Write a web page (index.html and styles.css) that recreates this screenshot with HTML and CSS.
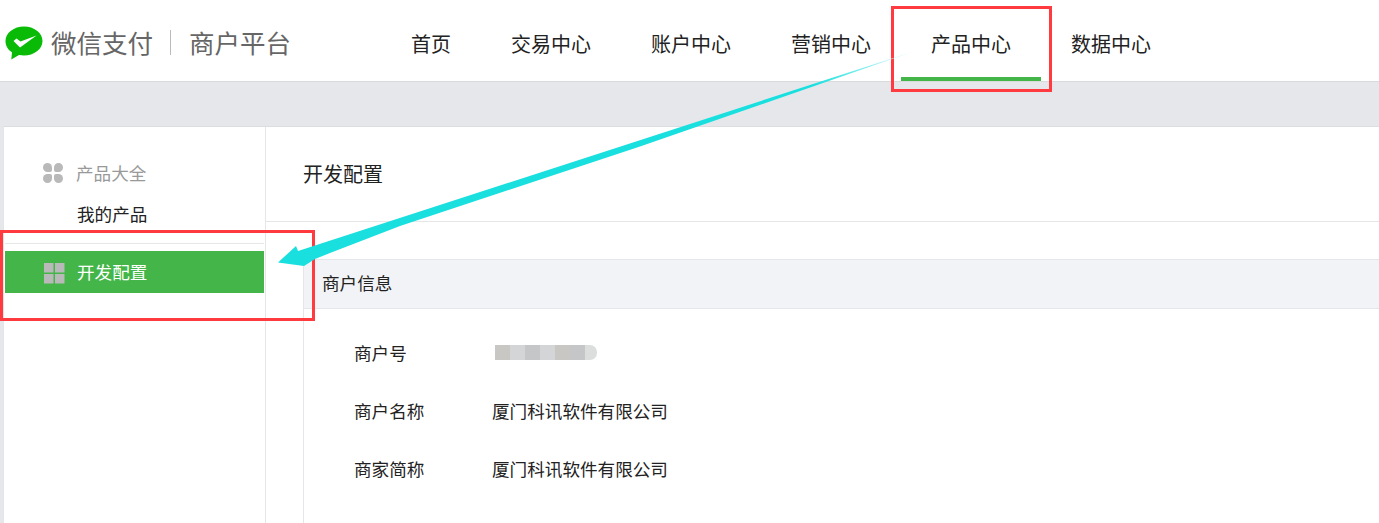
FILE: index.html
```html
<!DOCTYPE html>
<html lang="zh-CN">
<head>
  <meta charset="UTF-8">
  <title>微信支付商户平台</title>
  <link rel="stylesheet" href="styles.css">
</head>
<body>
  <header class="topbar">
    <div class="logo">
      <svg class="logo-icon" width="38" height="34" viewBox="0 0 38 34">
        <path d="M19 0.500C9 0.500 0.500 6.700 0.500 15C0.500 19.800 3 23.800 7 26.300L6.300 33.500L14 29C15.600 29.300 17.300 29.500 19 29.500C29 29.500 37.500 23.300 37.500 15C37.500 6.700 29 0.500 19 0.500Z" fill="#09bb07"/>
        <path d="M8.500 15L11.500 12.500L15.500 15.500L31.500 9.500L15 21.500Z" fill="#fff"/>
      </svg>
      <span class="logo-name">微信支付</span>
      <span class="logo-line"></span>
      <span class="logo-name">商户平台</span>
    </div>
    <nav class="nav">
      <a class="nav-item">首页</a>
      <a class="nav-item">交易中心</a>
      <a class="nav-item">账户中心</a>
      <a class="nav-item">营销中心</a>
      <a class="nav-item active">产品中心</a>
      <a class="nav-item">数据中心</a>
    </nav>
  </header>

  <div class="page">
    <aside class="sidebar">
      <div class="side-title">
        <svg class="side-icon" width="22" height="22" viewBox="0 0 22 22" fill="#b9b9b9">
          <path d="M5.500 1A4.500 4.500 0 0 1 10 5.500V8A2 2 0 0 1 8 10H5.500A4.500 4.500 0 0 1 5.500 1Z"/>
          <path d="M16.500 1A4.500 4.500 0 0 1 16.500 10H14A2 2 0 0 1 12 8V5.500A4.500 4.500 0 0 1 16.500 1Z"/>
          <path d="M5.500 12H8A2 2 0 0 1 10 14V16.500A4.500 4.500 0 1 1 5.500 12Z"/>
          <path d="M14 12H16.500A4.500 4.500 0 1 1 12 16.500V14A2 2 0 0 1 14 12Z"/>
        </svg>
        <span class="side-text">产品大全</span>
      </div>
      <div class="side-link">我的产品</div>
      <div class="side-divider"></div>
      <div class="side-active">
        <svg class="side-icon low" width="22" height="22" viewBox="0 0 22 22" fill="#b9b9b9">
          <rect x="1" y="1" width="9.500" height="9.500"/>
          <rect x="12" y="1" width="9.500" height="9.500"/>
          <rect x="1" y="12" width="9.500" height="9.500"/>
          <rect x="12" y="12" width="9.500" height="9.500"/>
        </svg>
        <span class="side-text">开发配置</span>
      </div>
    </aside>

    <main class="content">
      <h1 class="content-title">开发配置</h1>
      <section class="panel">
        <h2 class="panel-head">商户信息</h2>
        <dl class="info">
          <div class="info-row">
            <dt>商户号</dt>
            <dd class="masked">
              <i class="m1"></i><i class="m2"></i><i class="m3"></i><i class="m2"></i><i class="m1"></i><i class="m3"></i><i class="m4"></i>
            </dd>
          </div>
          <div class="info-row">
            <dt>商户名称</dt>
            <dd>厦门科讯软件有限公司</dd>
          </div>
          <div class="info-row">
            <dt>商家简称</dt>
            <dd>厦门科讯软件有限公司</dd>
          </div>
        </dl>
      </section>
    </main>
  </div>

  <!-- annotations drawn on top of the screenshot -->
  <div class="mark mark-nav"></div>
  <div class="mark mark-side"></div>
  <svg class="arrow" width="1379" height="523" viewBox="0 0 1379 523">
    <defs>
      <linearGradient id="arrowFill" gradientUnits="userSpaceOnUse" x1="278" y1="262" x2="915" y2="51">
        <stop offset="0" stop-color="#19dfdf"/>
        <stop offset="0.84" stop-color="#19dfdf"/>
        <stop offset="1" stop-color="#e8fbfb"/>
      </linearGradient>
    </defs>
    <path d="M278 262.500L296 246L298 251L915 51L640 146.500L400 226L330 253L315 259L304 266Z" fill="url(#arrowFill)"/>
  </svg>
</body>
</html>
```

FILE: styles.css
```css
* {
  box-sizing: border-box;
}
html, body {
  height: 523px;
  overflow: hidden;
}
body {
  margin: 0;
  background-color: #e5e7eb;
  color: #222;
  font-family: "Noto Sans CJK SC", "Liberation Sans", sans-serif;
  position: relative;
}
.topbar {
  display: flex;
  height: 82px;
  background: #fff;
  border-bottom: 1px solid #d9dadc;
}
.logo {
  display: flex;
  align-items: center;
  width: 381px;
  height: 81px;
  padding: 3px 0 0 5px;
}
.logo-icon {
  margin-right: 8px;
  margin-top: 1px;
}
.logo-name {
  font-size: 25.500px;
  line-height: 34px;
  color: #666;
}
.logo-line {
  width: 1px;
  height: 25px;
  margin: 0 18px 0 17px;
  background: #bbb;
}
.nav {
  display: flex;
}
.nav-item {
  height: 81px;
  padding: 0 30px;
  border-bottom: 4px solid transparent;
  font-size: 20px;
  line-height: 88px;
  white-space: nowrap;
}
.nav-item.active {
  border-bottom-color: #44b549;
}
.page {
  display: flex;
  height: 397px;
  margin: 44px 0 0 3px;
  background: #fff;
  border-top: 1px solid #dcdde0;
  border-left: 1px solid #e4e5e7;
}
.sidebar {
  width: 262px;
  padding-top: 25px;
  border-right: 1px solid #e5e6e8;
  font-size: 17.600px;
}
.side-title, .side-active {
  display: flex;
  align-items: center;
  padding-left: 38px;
}
.side-title {
  height: 42px;
  color: #999;
}
.side-icon {
  margin-right: 12px;
}
.side-icon.low {
  margin-top: 2px;
}
.side-text {
  margin-bottom: 2px;
}
.side-link {
  height: 42px;
  padding-left: 73px;
  line-height: 40px;
}
.side-divider {
  height: 1px;
  margin: 7px 1px;
  background: #e5e6e8;
}
.side-active {
  height: 42px;
  margin: 0 1px;
  background: #44b549;
  color: #fff;
}
.content {
  flex: 1;
  display: flex;
  flex-direction: column;
}
.content-title {
  height: 95px;
  margin: 0;
  padding-left: 37px;
  border-bottom: 1px solid #e5e6e8;
  font-size: 20px;
  font-weight: 400;
  line-height: 94px;
}
.panel {
  flex: 1;
  margin: 37px 0 0 37px;
  border-left: 1px solid #e5e6e8;
}
.panel-head {
  height: 50px;
  margin: 0;
  padding-left: 18px;
  background: #f2f3f7;
  border-top: 1px solid #e5e6ea;
  border-bottom: 1px solid #e5e6ea;
  font-size: 17.600px;
  font-weight: 400;
  line-height: 45px;
}
.info {
  margin: 15px 0 0;
}
.info-row {
  display: flex;
  height: 58px;
  padding-left: 50px;
  font-size: 17.600px;
  line-height: 58px;
}
.info-row dt {
  width: 138px;
}
.info-row dd {
  margin: 0;
}
.masked {
  display: flex;
  align-items: center;
  height: 58px;
  padding: 0 0 2px 3px;
}
.masked i {
  display: block;
  width: 15px;
  height: 15px;
}
.masked .m1 { background: #c8c7c3; }
.masked .m2 { background: #d4d5d7; }
.masked .m3 { background: #c5c6c8; }
.masked .m4 {
  width: 12px;
  background: #dcdddd;
  border-radius: 0 7px 7px 0;
}
.mark {
  position: absolute;
  border: 3px solid #ff3b3f;
}
.mark-nav {
  left: 891px;
  top: 6px;
  width: 161px;
  height: 86px;
}
.mark-side {
  left: 0;
  top: 230px;
  width: 315px;
  height: 91px;
}
.arrow {
  position: absolute;
  left: 0;
  top: 0;
}
```
